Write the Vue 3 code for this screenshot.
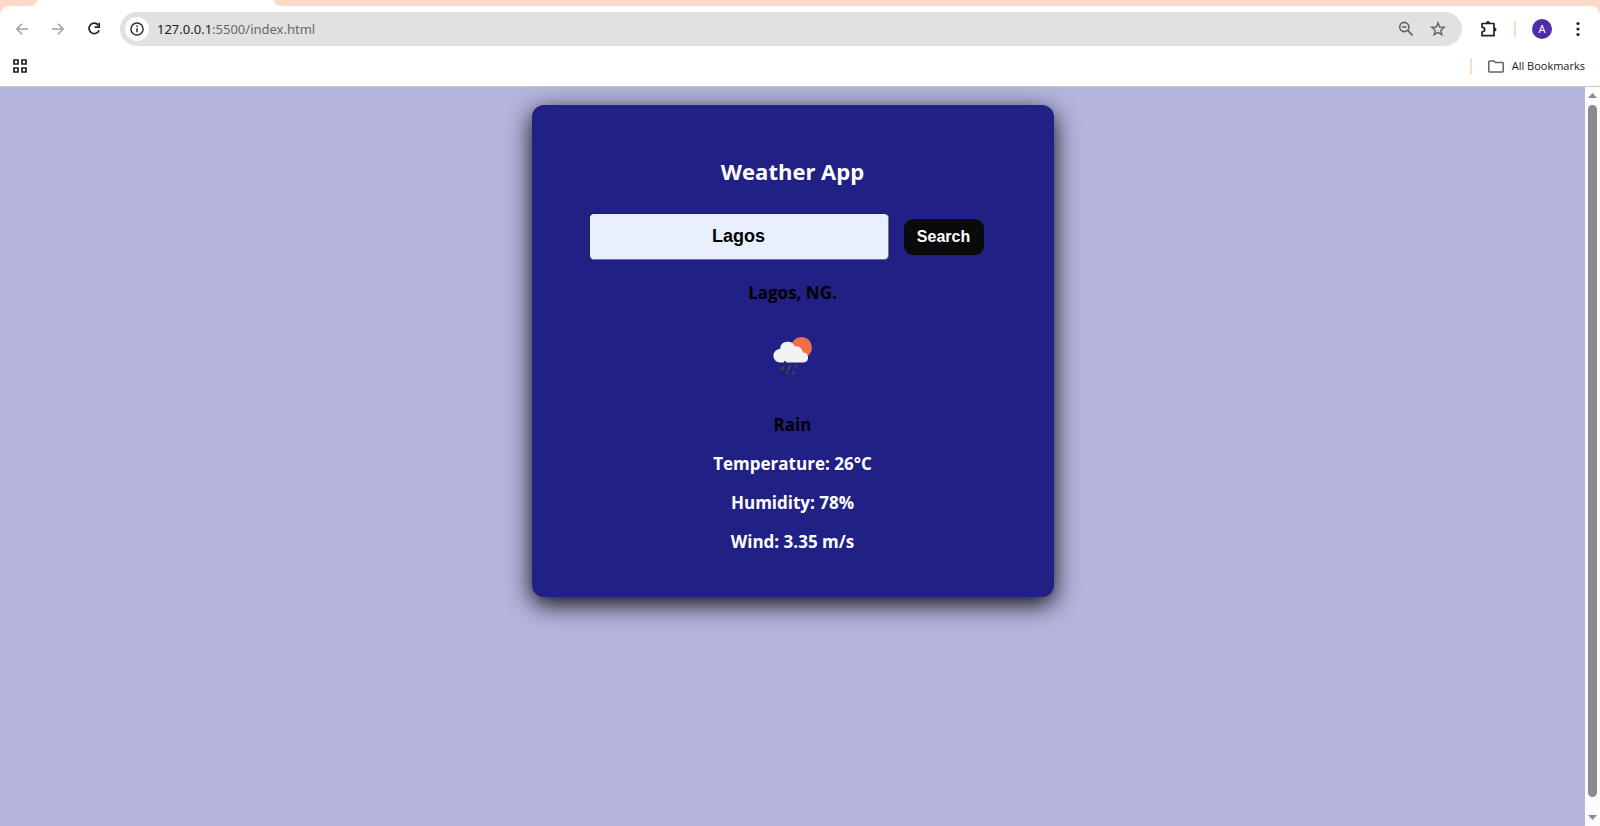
<script setup>
import { ref } from 'vue'

const address = { host: '127.0.0.1', path: ':5500/index.html' }
const city = ref('Lagos')
const weather = {
  place: 'Lagos, NG.',
  condition: 'Rain',
  readings: ['Temperature: 26°C', 'Humidity: 78%', 'Wind: 3.35 m/s'],
}
</script>

<template>
  <div class="window">
    <header class="chrome">
      <div class="tabs">
        <svg class="tab" viewBox="0 0 260 6" aria-hidden="true">
          <path d="M0 6C5 6 8 4 10 0H245C247 4 250 6 256 6Z" fill="#fff" />
        </svg>
      </div>
      <nav class="toolbar" aria-label="Browser">
        <button class="tool" type="button" aria-label="Back">
          <svg width="12" height="12" viewBox="0 0 12 12"><path d="M12 6H1M6 .8L.9 6 6 11.2" fill="none" stroke="#a0a0a0" stroke-width="1.6" /></svg>
        </button>
        <button class="tool" type="button" aria-label="Forward">
          <svg width="12" height="12" viewBox="0 0 12 12"><path d="M0 6H11M6 .8L11.100 6 6 11.2" fill="none" stroke="#a0a0a0" stroke-width="1.6" /></svg>
        </button>
        <button class="tool" type="button" aria-label="Reload">
          <svg width="14" height="14" viewBox="0 0 14 14"><path d="M11.300 3.200A5.200 5.200 0 1 0 12.100 8.200" fill="none" stroke="#202124" stroke-width="1.700" /><path d="M12.200 .8V5.200H7.600" fill="none" stroke="#202124" stroke-width="1.700" /></svg>
        </button>
        <div class="omnibox">
          <button class="site" type="button" aria-label="Site information">
            <svg width="14" height="14" viewBox="0 0 14 14"><circle cx="7" cy="7" r="6.100" fill="none" stroke="#303134" stroke-width="1.500" /><path d="M7 6.200V10.300M7 3.600V5" stroke="#303134" stroke-width="1.500" /></svg>
          </button>
          <span class="url">{{ address.host }}<span class="path">{{ address.path }}</span></span>
          <button class="inner" type="button" aria-label="Zoom">
            <svg width="16" height="16" viewBox="0 0 16 16"><circle cx="6.300" cy="6" r="4.600" fill="none" stroke="#5f6368" stroke-width="1.600" /><path d="M9.700 9.400L14.600 14.300M4 6H8.600" stroke="#5f6368" stroke-width="1.700" /></svg>
          </button>
          <button class="inner" type="button" aria-label="Bookmark this page">
            <svg width="16" height="16" viewBox="0 0 16 16"><path d="M8 1.900L9.700 6 14.200 6.400 10.800 9.300 11.800 13.700 8 11.400 4.200 13.700 5.200 9.300 1.800 6.400 6.300 6Z" fill="none" stroke="#5f6368" stroke-width="1.400" /></svg>
          </button>
        </div>
        <div class="actions">
          <button class="plain" type="button" aria-label="Extensions">
            <svg width="18" height="18" viewBox="0 0 18 18"><path d="M2 3.500H14V15.700H2V12C5.600 11.500 5.600 7.700 2 7.200Z" fill="none" stroke="#202124" stroke-width="1.700" stroke-linejoin="round" /><path d="M6 3A2 2 0 0 1 10 3ZM14.500 7.500A2 2 0 0 1 14.500 11.500Z" fill="#202124" /></svg>
          </button>
          <span class="divider"></span>
          <button class="avatar" type="button" aria-label="Profile">A</button>
          <button class="plain menu" type="button" aria-label="Menu">
            <svg width="4" height="16" viewBox="0 0 4 16" fill="#202124"><circle cx="2" cy="2.500" r="1.600" /><circle cx="2" cy="8" r="1.600" /><circle cx="2" cy="13.500" r="1.600" /></svg>
          </button>
        </div>
      </nav>
      <div class="bookmarks">
        <button class="plain" type="button" aria-label="Tab groups">
          <svg width="14" height="14" viewBox="0 0 14 14" fill="none" stroke="#202124" stroke-width="1.700"><path d="M1 1H5V5H1ZM9 1H13V5H9ZM1 9H5V13H1ZM9 9H13V13H9Z" /></svg>
        </button>
        <div class="all">
          <span class="divider"></span>
          <button class="plain folder" type="button">
            <svg width="16" height="13" viewBox="0 0 16 13"><path d="M1.500 1H6L7.500 2.600H14.500Q15.200 2.600 15.200 3.300V11.300Q15.200 12 14.500 12H1.500Q.8 12 .8 11.300V1.700Q.8 1 1.500 1Z" fill="none" stroke="#5f6368" stroke-width="1.500" /></svg>
            All Bookmarks
          </button>
        </div>
      </div>
    </header>

    <div class="viewport">
      <main class="page">
        <section class="card">
          <h1>Weather App</h1>
          <form class="search" @submit.prevent>
            <input v-model="city" type="text" aria-label="City" />
            <button type="submit">Search</button>
          </form>
          <p class="dark place">{{ weather.place }}</p>
          <svg class="icon" viewBox="0 0 80 80" role="img" aria-label="Rain">
            <circle cx="48.500" cy="31.500" r="10.500" fill="#ec6e4c" />
            <path d="M27 46.500A6.700 6.700 0 0 1 27 33.100 7.800 7.800 0 0 1 42 30.500 6.500 6.500 0 0 1 49.800 36.600 5 5 0 0 1 51 46.500Z" fill="#f2f2f2" />
            <circle cx="32" cy="46.300" r="1.200" fill="#303030" />
            <path d="M30 51.600L29.200 53.700M36.700 50.500L35.500 53.200M43.300 49.600L43 50.400M34.500 56.200L34.300 56.700M41.100 55.700L40.300 57.500" stroke="#484848" stroke-width="2.200" stroke-linecap="round" />
          </svg>
          <p class="dark">{{ weather.condition }}</p>
          <p v-for="reading in weather.readings" :key="reading">{{ reading }}</p>
        </section>
      </main>
      <div class="scrollbar" aria-hidden="true">
        <svg width="9" height="5" viewBox="0 0 9 5"><path d="M0 5L4.500 0 9 5Z" fill="#8b8b8b" /></svg>
        <span class="thumb"></span>
        <svg width="9" height="5" viewBox="0 0 9 5"><path d="M0 0L4.500 5 9 0Z" fill="#8b8b8b" /></svg>
      </div>
    </div>
  </div>
</template>

<style>
body {
  margin: 0;
}
</style>

<style scoped>
.window {
  display: flex;
  flex-direction: column;
  min-height: 100vh;
  font-family: "Noto Sans", "Open Sans", sans-serif;
}

button {
  padding: 0;
  border: 0;
  background: none;
  font: inherit;
  color: inherit;
}

svg {
  display: block;
}

.chrome {
  background: linear-gradient(#fcdac7 0 16px, #fff 16px);
  border-bottom: 1px solid #c8c8cb;
}

.tabs {
  height: 6px;
  padding-left: 28px;
}

.tab {
  width: 260px;
  height: 6px;
}

.toolbar {
  display: flex;
  align-items: center;
  height: 46px;
  padding: 0 8px 0 4px;
  background: #fff;
  border-radius: 9px 9px 0 0;
}

.tool {
  display: grid;
  place-items: center;
  width: 36px;
  height: 34px;
}

.omnibox {
  display: flex;
  flex: 1;
  align-items: center;
  height: 34px;
  margin-left: 8px;
  padding: 0 8px 0 5px;
  border-radius: 17px;
  background: #e1e1e1;
}

.site {
  display: grid;
  place-items: center;
  width: 24px;
  height: 24px;
  border-radius: 50%;
  background: #fff;
}

.url {
  flex: 1;
  margin-left: 8px;
  font-size: 13px;
  line-height: 20px;
  color: #202124;
}

.path {
  color: #66686c;
}

.inner {
  display: grid;
  place-items: center;
  width: 32px;
  height: 32px;
}

.actions {
  display: flex;
  align-items: center;
  margin-left: 18px;
}

.divider {
  width: 2px;
  height: 16px;
  background: #fcdac7;
}

.actions .divider {
  margin: 0 16px;
}

.avatar {
  width: 20px;
  height: 20px;
  border-radius: 50%;
  background: #512da8;
  color: #fff;
  font-size: 11px;
  line-height: 20px;
}

.menu {
  padding: 0 12px 0 24px;
}

.bookmarks {
  display: flex;
  align-items: center;
  justify-content: space-between;
  height: 28px;
  padding: 0 15px 6px 13px;
  background: #fff;
  font-family: "Open Sans", sans-serif;
  font-size: 11px;
  line-height: 16px;
  color: #202124;
}

.bookmarks svg {
  flex: none;
}

.all,
.folder {
  display: flex;
  align-items: center;
}

.folder {
  gap: 8px;
  margin-left: 16px;
}

.viewport {
  display: flex;
  flex: 1;
}

.page {
  flex: 1;
  padding: 18px 16px;
  background: #b5b4de;
}

.card {
  box-sizing: border-box;
  max-width: 522px;
  margin: 0 auto;
  padding: 50px 54px 45px;
  border-radius: 12px;
  background: #212085;
  box-shadow: 0 7px 24px rgba(0, 0, 0, 0.95);
  color: #fff;
  font-family: "Trebuchet MS", "Open Sans", sans-serif;
  font-size: 17px;
  font-weight: 700;
  text-align: center;
}

h1 {
  margin: 0;
  font-size: 22px;
  line-height: 32px;
}

.search {
  display: flex;
  align-items: center;
  gap: 15px;
  margin: 26px 0 22px;
  padding: 0 16px 0 3px;
}

.search input {
  box-sizing: border-box;
  flex: 1;
  min-width: 0;
  height: 47px;
  border: 1px solid;
  border-color: #26262b #767676 #767676 #26262b;
  border-radius: 5px;
  background: #e8f0fe;
  color: #000;
  font: 700 18px "Liberation Sans", Arial, sans-serif;
  text-align: center;
}

.search button {
  width: 80px;
  height: 36px;
  border-radius: 9px;
  background: #0a0a0a;
  color: #fff;
  font: 700 16px "Liberation Sans", Arial, sans-serif;
}

p {
  margin: 0 0 18px;
  line-height: 21px;
}

.dark {
  color: #000;
}

.place {
  margin-bottom: 13px;
}

.icon {
  width: 80px;
  height: 80px;
  margin: 0 auto 18px;
}

p:last-child {
  margin-bottom: 0;
}

.scrollbar {
  display: flex;
  flex-direction: column;
  align-items: center;
  gap: 7px;
  width: 15px;
  padding: 6px 0;
  box-sizing: border-box;
  background: #fcfcfc;
}

.thumb {
  flex: 1;
  width: 9px;
  margin-bottom: 11px;
  border-radius: 5px;
  background: #8b8b8b;
}
</style>
